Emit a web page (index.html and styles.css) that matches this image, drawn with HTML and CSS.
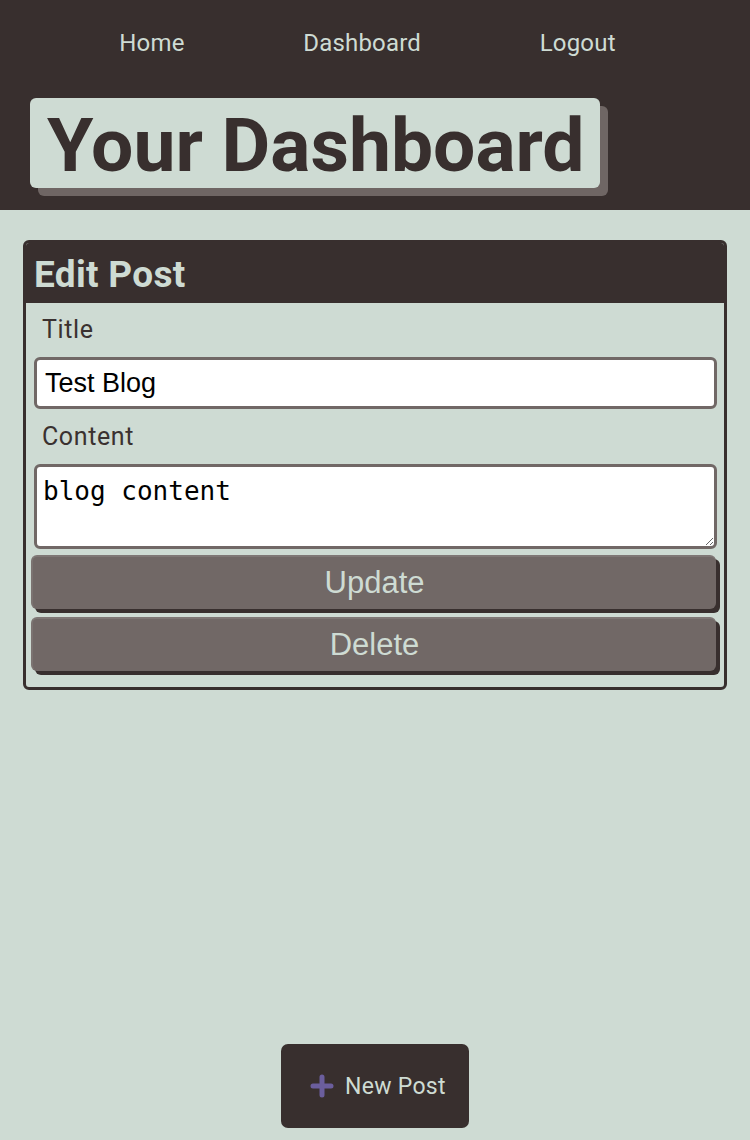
FILE: index.html
```
<!DOCTYPE html>
<html lang="en">
<head>
<meta charset="utf-8">
<title>Your Dashboard</title>
<link rel="stylesheet" href="styles.css">
</head>
<body>
<header class="site-header">
  <nav class="nav">
    <a class="nav-link" href="#">Home</a>
    <a class="nav-link" href="#">Dashboard</a>
    <a class="nav-link" href="#">Logout</a>
  </nav>
  <h1 class="page-title">Your Dashboard</h1>
</header>
<main class="main">
  <section class="card">
    <div class="card-head"><h2 class="card-title">Edit Post</h2></div>
    <form class="card-body">
      <label class="field-label" for="title">Title</label>
      <input class="field-input" id="title" type="text" value="Test Blog">
      <label class="field-label field-label-next" for="content">Content</label>
      <textarea class="field-area" id="content">blog content</textarea>
      <button class="btn" type="button">Update</button>
      <button class="btn" type="button">Delete</button>
    </form>
  </section>
</main>
<footer class="footer">
  <button class="new-post" type="button">
    <svg class="plus" width="24" height="24" viewBox="0 0 24 24" aria-hidden="true">
      <path d="M12 3v18M3 12h18" stroke="#6b5e9d" stroke-width="5" stroke-linecap="round" fill="none"/>
    </svg>
    <span>New Post</span>
  </button>
</footer>
</body>
</html>
```
FILE: styles.css
```
* { box-sizing: border-box; }
html, body { margin: 0; padding: 0; }
body {
  background: #cedbd3;
  color: #382f2e;
  font-family: Roboto, "Noto Sans", sans-serif;
  min-height: 100vh;
  display: flex;
  flex-direction: column;
}
.site-header {
  background: #382f2e;
  height: 210px;
  padding: 0;
}
.nav {
  display: flex;
  justify-content: space-around;
  padding: 0 75px 0 60px;
  height: 86px;
  align-items: center;
}
.nav-link {
  color: #cedbd3;
  text-decoration: none;
  font-size: 24px;
  letter-spacing: 0.2px;
}
.page-title {
  display: inline-block;
  margin: 12px 0 0 30px;
  background: #cedbd3;
  color: #382f2e;
  border-radius: 6px;
  box-shadow: 8px 8px 0 #6f6664;
  font-size: 75px;
  font-weight: 700;
  line-height: 86px;
  height: 90px;
  padding: 4px 15px 0 17px;
  letter-spacing: 0;
}
.main { padding: 30px 23px 0; }
.card {
  border: 3px solid #382f2e;
  border-radius: 6px;
  overflow: hidden;
}
.card-head {
  background: #382f2e;
  height: 60px;
  display: flex;
  align-items: center;
  padding: 2px 0 0 8px;
}
.card-title {
  margin: 0;
  color: #cedbd3;
  font-size: 37px;
  font-weight: 700;
  letter-spacing: 0.3px;
}
.card-body {
  padding: 0 7px 16px 8px;
  display: flex;
  flex-direction: column;
}
.field-label {
  display: block;
  font-size: 25px;
  line-height: 54px;
  padding: 0 0 0 8px;
  letter-spacing: 0.6px;
  color: #3a3130;
}
.field-label-next { line-height: 55px; }
.field-input {
  height: 52px;
  border: 3px solid #716866;
  border-radius: 6px;
  background: #fff;
  padding: 0 8px;
  font-family: "Liberation Sans", Arial, sans-serif;
  font-size: 27px;
  color: #000;
  width: 100%;
}
.field-area {
  height: 85px;
  border: 3px solid #716866;
  border-radius: 6px;
  background: #fff;
  padding: 9px 6px;
  font-family: "DejaVu Sans Mono", monospace;
  font-size: 26px;
  line-height: normal;
  color: #000;
  width: 100%;
  margin: 0;
  display: block;
}
.btn {
  height: 54px;
  margin: 6px 0 0 -3px;
  width: calc(100% + 2px);
  background: #716866;
  color: #cedbd3;
  border: none;
  border-top: 2px solid #7f7775;
  border-left: 2px solid #7b7371;
  border-radius: 6px;
  box-shadow: 4px 4px 0 #382f2e;
  font-family: "Liberation Sans", Arial, sans-serif;
  font-size: 31px;
  padding: 0;
}
.btn + .btn { margin-top: 8px; }
.footer {
  margin-top: auto;
  display: flex;
  justify-content: center;
  padding-bottom: 12px;
}
.new-post {
  width: 188px;
  height: 84px;
  background: #382f2e;
  border: none;
  border-radius: 7px;
  color: #cedbd3;
  display: flex;
  align-items: center;
  padding: 0 0 0 29px;
  gap: 11px;
  font-family: Roboto, "Noto Sans", sans-serif;
  font-size: 23px;
  letter-spacing: 0.3px;
}
.plus { display: block; flex: none; }
```
